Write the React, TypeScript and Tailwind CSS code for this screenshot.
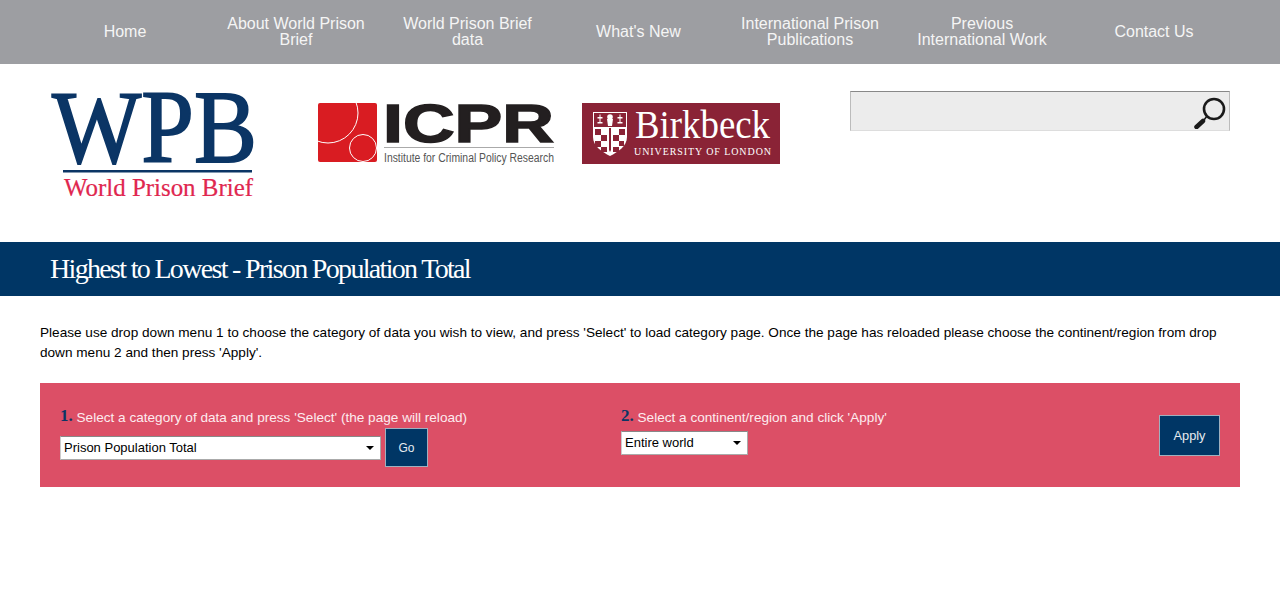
const navItems = [
  ["Home"],
  ["About World Prison", "Brief"],
  ["World Prison Brief", "data"],
  ["What's New"],
  ["International Prison", "Publications"],
  ["Previous", "International Work"],
  ["Contact Us"],
];

function WpbLogo() {
  return (
    <svg width="212" height="118" viewBox="0 0 212 118" className="block">
      <text x="4" y="74" fontFamily="Liberation Serif" fontSize="103" fill="#0b3565" stroke="#0b3565" strokeWidth="1.8" textLength="205" lengthAdjust="spacingAndGlyphs">
        WPB
      </text>
      <rect x="15" y="82" width="189" height="2.5" fill="#0b3565" />
      <text x="16" y="108" fontFamily="Liberation Serif" fontSize="25" fill="#e0274f" stroke="#e0274f" strokeWidth="0.2" textLength="189" lengthAdjust="spacingAndGlyphs">
        World Prison Brief
      </text>
    </svg>
  );
}

function IcprLogo() {
  return (
    <svg width="238" height="64" viewBox="0 0 238 64" className="block">
      <rect x="0" y="1" width="59" height="59" rx="2" fill="#d91c22" />
      <circle cx="10" cy="11" r="30" fill="none" stroke="#fff" strokeWidth="1" />
      <circle cx="45" cy="46" r="13.5" fill="none" stroke="#fff" strokeWidth="1" />
      <text x="65" y="39.5" fontFamily="Liberation Sans" fontWeight="700" fontSize="54" fill="#231f20" stroke="#231f20" strokeWidth="1.5" textLength="171" lengthAdjust="spacingAndGlyphs">
        ICPR
      </text>
      <rect x="66" y="45" width="170" height="1" fill="#aaa" />
      <text x="66" y="59.5" fontFamily="Liberation Sans" fontSize="12.5" fill="#555" textLength="170" lengthAdjust="spacingAndGlyphs">
        Institute for Criminal Policy Research
      </text>
    </svg>
  );
}

function BirkbeckLogo() {
  return (
    <svg width="198" height="61" viewBox="0 0 198 61" className="block">
      <rect width="198" height="61" fill="#8a2336" />
      {/* shield */}
      <path d="M11 9h34v25c0 9-9 15-17 19c-8-4-17-10-17-19z" fill="#fff" />
      <path d="M12 10h32v14H12z" fill="#8a2336" />
      <circle cx="28" cy="14" r="2.8" fill="#fff" />
      <path d="M25 16h6l-1 7h-4zM15.5 14h5v1.5h-5zM35.5 14h5v1.5h-5zM17.5 11.5h1v8h-1zM37.5 11.5h1v8h-1zM15.5 19h5v1.5h-5zM35.5 19h5v1.5h-5z" fill="#fff" />
      <path d="M13 26h6v6h-6zM19 32h6v6h-6zM13 38h6v6h-6zM37 26h6v6h-6zM31 32h6v6h-6zM37 38h5v5h-5zM19 44h6v5h-6zM31 44h6v5h-6z" fill="#8a2336" />
      <path d="M27 25h2v22l-1 2l-1-2z" fill="#8a2336" />
      <text x="53" y="35" fontFamily="Liberation Serif" fontSize="39" fill="#fff" textLength="135" lengthAdjust="spacingAndGlyphs">
        Birkbeck
      </text>
      <text x="52" y="52" fontFamily="Liberation Serif" fontSize="10" fill="#fff" textLength="137" lengthAdjust="spacing">
        UNIVERSITY OF LONDON
      </text>
    </svg>
  );
}

function SearchGlass() {
  return (
    <svg width="36" height="36" viewBox="0 0 36 36">
      <circle cx="22" cy="16" r="10" fill="none" stroke="#1a1a1a" strokeWidth="2.6" />
      <path d="M15 23l-3 4" stroke="#1a1a1a" strokeWidth="1.5" />
      <path d="M11 28L4.5 34" stroke="#1a1a1a" strokeWidth="4.5" strokeLinecap="round" />
    </svg>
  );
}

function FakeSelect({ label, width }: { label: string; width: string }) {
  return (
    <div className={`${width} flex h-6 items-center justify-between border border-[#aaa] border-t-[#888] border-l-[#ccc] bg-white pl-[3px] pr-[6px] text-[13px] text-black`}>
      <span>{label}</span>
      <span className="h-0 w-0 border-x-[4px] border-t-[4px] border-x-transparent border-t-black" />
    </div>
  );
}

export default function App() {
  return (
    <div className="min-h-[600px] bg-white font-['Liberation_Sans',Arial,sans-serif]">
      <nav className="h-16 bg-[#9d9ea2]">
        <ul className="ml-10 grid h-full w-[1200px] grid-cols-[170px_172px_171px_171px_172px_172px_172px]">
          {navItems.map((lines) => (
            <li key={lines[0]} className="flex flex-col items-center justify-center text-center text-base leading-4 text-[#f5f5f5]">
              {lines.map((l) => (
                <span key={l}>{l}</span>
              ))}
            </li>
          ))}
        </ul>
      </nav>

      <header className="flex h-[178px] items-start">
        <div className="ml-[48px] mt-[24px]">
          <WpbLogo />
        </div>
        <div className="ml-[58px] mt-[38px]">
          <IcprLogo />
        </div>
        <div className="ml-[26px] mt-[39px]">
          <BirkbeckLogo />
        </div>
        <div className="ml-[70px] mt-[27px] flex h-10 w-[380px] items-center justify-end border border-t-[#888] border-x-[#bbb] border-b-[#ddd] bg-[#ececec] pr-[1px]">
          <SearchGlass />
        </div>
      </header>

      <div className="flex h-[54px] items-center bg-[#003665] pl-[50px]">
        <h1 className="font-['Liberation_Serif',serif] text-[28px] tracking-[-1.68px] text-white">
          Highest to Lowest - Prison Population Total
        </h1>
      </div>

      <div className="px-10 pt-[27px]">
        <p className="text-[13.6px] leading-5 text-black">
          Please use drop down menu 1 to choose the category of data you wish to view, and press 'Select' to load category page. Once the page has reloaded please choose the continent/region from drop down menu 2 and then press 'Apply'.
        </p>

        <div className="mt-[20px] flex h-[104px] bg-[#dc4f66] pl-5 pr-5 pt-[24px]">
          <div className="w-[561px]">
            <p className="text-[13.6px] leading-5 text-[#fdecef]">
              <b className="relative top-[-1px] font-['Liberation_Serif',serif] text-[17px] text-[#0b3565]">1.</b> Select a category of data and press 'Select' (the page will reload)
            </p>
            <div className="flex items-center gap-1">
              <FakeSelect label="Prison Population Total" width="w-[321px]" />
              <button className="h-[39px] w-[43px] border border-[#9fb0bf] bg-[#003665] text-xs text-[#e6ebf0]">Go</button>
            </div>
          </div>
          <div className="flex-1">
            <p className="text-[13.6px] leading-5 text-[#fdecef]">
              <b className="relative top-[-1px] font-['Liberation_Serif',serif] text-[17px] text-[#0b3565]">2.</b> Select a continent/region and click 'Apply'
            </p>
            <div className="mt-[3px]">
              <FakeSelect label="Entire world" width="w-[127px]" />
            </div>
          </div>
          <button className="mt-2 h-[41px] w-[61px] border border-[#9fb0bf] bg-[#003665] text-[12.8px] text-[#e6ebf0]">Apply</button>
        </div>
      </div>
    </div>
  );
}
